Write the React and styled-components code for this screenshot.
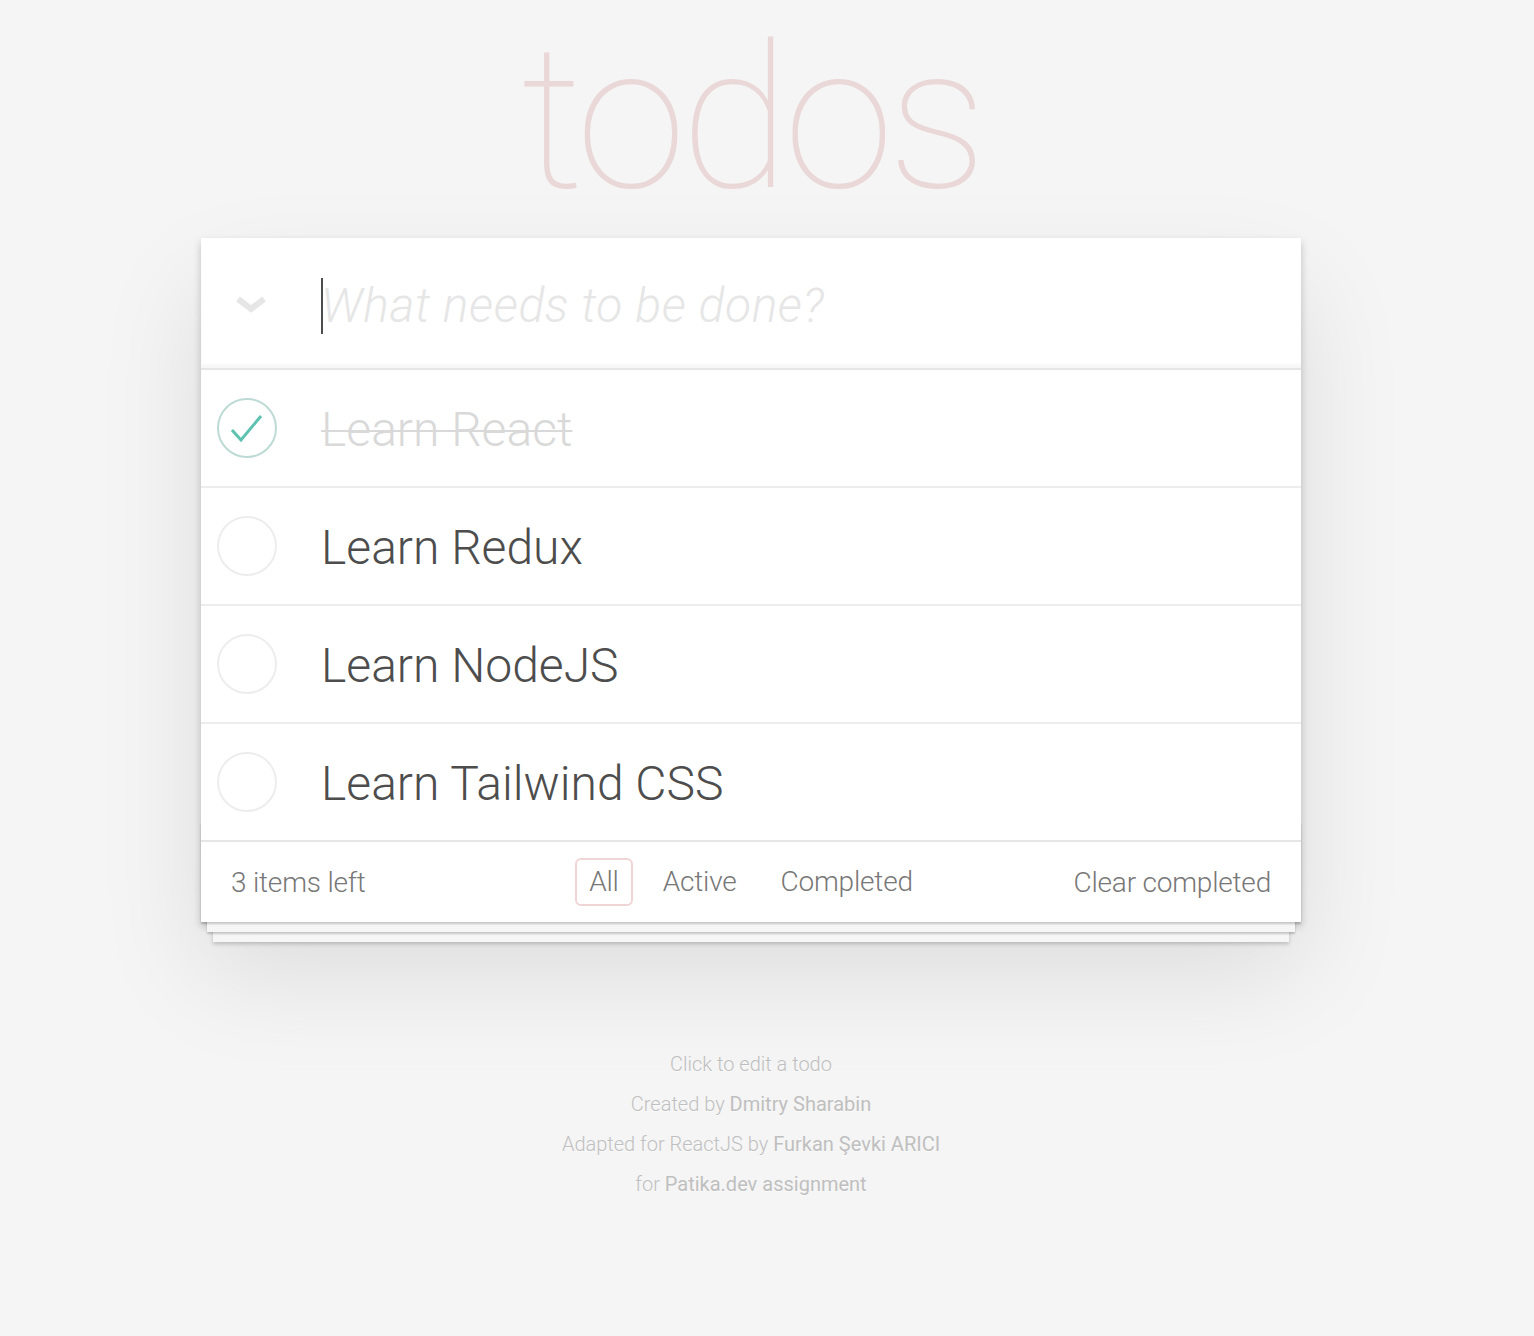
import React, { useState } from "react";
import styled, { createGlobalStyle } from "styled-components";

const GlobalStyle = createGlobalStyle`
  html, body {
    margin: 0;
    padding: 0;
  }
  body {
    background: #f5f5f5;
    color: #4d4d4d;
    font-family: "Helvetica Neue", Roboto, "Liberation Sans", Arial, sans-serif;
    font-weight: 300;
    -webkit-font-smoothing: antialiased;
  }
`;

const Page = styled.div`
  display: flex;
  justify-content: center;
  padding-right: 32px;
  min-height: 1336px;
  box-sizing: border-box;
`;

const Container = styled.section`
  width: 1100px;
  display: flex;
  flex-direction: column;
`;

const Title = styled.h1`
  margin: 0;
  height: 238px;
  font-size: 200px;
  line-height: 238px;
  font-weight: 100;
  text-align: center;
  color: rgba(175, 47, 47, 0.15);
  letter-spacing: -6px;
`;

const Card = styled.div`
  background: #fff;
  position: relative;
  box-shadow: 0 4px 8px 0 rgba(0, 0, 0, 0.2), 0 50px 100px 0 rgba(0, 0, 0, 0.1);
`;

const Header = styled.header`
  display: flex;
  align-items: center;
  height: 130px;
  box-shadow: inset 0 -4px 2px rgba(0, 0, 0, 0.03);
`;

const ToggleAll = styled.button`
  width: 120px;
  height: 100%;
  border: none;
  background: none;
  padding: 0;
  display: flex;
  align-items: center;
  justify-content: center;
  cursor: pointer;
  svg {
    margin-left: -20px;
    margin-top: 4px;
  }
`;

const Caret = styled.span`
  width: 2px;
  height: 56px;
  margin-top: 6px;
  margin-right: -2px;
  background: #4d4d4d;
`;

const NewTodo = styled.input`
  flex: 1;
  border: none;
  outline: none;
  background: transparent;
  font-family: inherit;
  font-size: 48px;
  font-weight: 300;
  color: #4d4d4d;
  caret-color: #4d4d4d;
  padding: 0;
  height: 60px;
  margin-top: 4px;
  &::placeholder {
    font-style: italic;
    color: #e6e6e6;
    font-weight: 300;
    letter-spacing: 0.6px;
  }
`;

const List = styled.ul`
  list-style: none;
  margin: 0;
  padding: 0;
  border-top: 2px solid #e6e6e6;
`;

const Item = styled.li`
  display: flex;
  align-items: center;
  height: 118px;
  box-sizing: border-box;
  border-bottom: 2px solid #ededed;
  &:last-child {
    border-bottom: none;
    height: 116px;
  }
`;

const CheckCell = styled.div`
  width: 120px;
  display: flex;
  padding-left: 16px;
  box-sizing: border-box;
`;

const Circle = styled.span`
  width: 60px;
  height: 60px;
  box-sizing: border-box;
  border-radius: 50%;
  border: 2px solid ${(p) => (p.$done ? "#bddad5" : "#ededed")};
  display: flex;
  align-items: center;
  justify-content: center;
`;

const Label = styled.label`
  font-size: 48px;
  line-height: 1.2;
  font-weight: 300;
  color: ${(p) => (p.$done ? "#d9d9d9" : "#4d4d4d")};
  text-decoration: ${(p) => (p.$done ? "line-through" : "none")};
  text-decoration-thickness: 2px;
  margin-top: 4px;
`;

const Footer = styled.footer`
  position: relative;
  height: 82px;
  box-sizing: border-box;
  border-top: 2px solid #e6e6e6;
  padding: 0 30px;
  display: grid;
  grid-template-columns: 1fr auto 1fr;
  align-items: center;
  color: #777;
  font-size: 28px;
  &::before {
    content: "";
    position: absolute;
    right: 0;
    bottom: 0;
    left: 0;
    height: 100px;
    overflow: hidden;
    z-index: 0;
    box-shadow: 0 2px 2px rgba(0, 0, 0, 0.2), 0 16px 0 -6px #f6f6f6,
      0 18px 2px -6px rgba(0, 0, 0, 0.2), 0 32px 0 -12px #f6f6f6,
      0 34px 4px -12px rgba(0, 0, 0, 0.2);
  }
`;

const FooterInner = styled.div`
  position: relative;
  z-index: 1;
  display: flex;
  justify-content: ${(p) => p.$align || "flex-start"};
  letter-spacing: -0.2px;
`;

const Filters = styled.ul`
  list-style: none;
  margin: 0;
  padding: 0;
  display: flex;
  gap: 16px;
`;

const Filter = styled.a`
  display: block;
  color: inherit;
  text-decoration: none;
  padding: 5px 12px;
  line-height: 34px;
  border: 2px solid ${(p) => (p.$selected ? "rgba(175, 47, 47, 0.2)" : "transparent")};
  border-radius: 6px;
  cursor: pointer;
`;

const Clear = styled.button`
  border: none;
  background: none;
  padding: 0;
  font-family: inherit;
  font-size: 28px;
  font-weight: 300;
  color: #777;
  letter-spacing: -0.2px;
  cursor: pointer;
`;

const Info = styled.footer`
  margin-top: 130px;
  text-align: center;
  color: #bfbfbf;
  font-size: 20px;
  text-shadow: 0 1px 0 rgba(255, 255, 255, 0.5);
  p {
    margin: 0 0 16px;
    line-height: 24px;
  }
  a {
    color: inherit;
    text-decoration: none;
    font-weight: 400;
  }
`;

const Chevron = () => (
  <svg width="32" height="18" viewBox="0 0 32 18">
    <path d="M3 3 L16 13 L29 3" fill="none" stroke="#e6e6e6" strokeWidth="6" />
  </svg>
);

const Check = () => (
  <svg width="36" height="30" viewBox="0 0 36 30">
    <path d="M3 17 L12 27 L32 3" fill="none" stroke="#5dc2af" strokeWidth="3" />
  </svg>
);

const initial = [
  { id: 1, text: "Learn React", done: true },
  { id: 2, text: "Learn Redux", done: false },
  { id: 3, text: "Learn NodeJS", done: false },
  { id: 4, text: "Learn Tailwind CSS", done: false },
];

export default function App() {
  const [todos] = useState(initial);
  const left = todos.filter((t) => !t.done).length;

  return (
    <Page>
      <GlobalStyle />
      <Container>
        <Title>todos</Title>
        <Card>
          <Header>
            <ToggleAll aria-label="Mark all as complete">
              <Chevron />
            </ToggleAll>
            <Caret />
            <NewTodo placeholder="What needs to be done?" />
          </Header>
          <List>
            {todos.map((t) => (
              <Item key={t.id}>
                <CheckCell>
                  <Circle $done={t.done}>{t.done && <Check />}</Circle>
                </CheckCell>
                <Label $done={t.done}>{t.text}</Label>
              </Item>
            ))}
          </List>
          <Footer>
            <FooterInner>{left} items left</FooterInner>
            <FooterInner $align="center">
              <Filters>
                <li><Filter $selected>All</Filter></li>
                <li><Filter>Active</Filter></li>
                <li><Filter>Completed</Filter></li>
              </Filters>
            </FooterInner>
            <FooterInner $align="flex-end">
              <Clear>Clear completed</Clear>
            </FooterInner>
          </Footer>
        </Card>
        <Info>
          <p>Click to edit a todo</p>
          <p>
            Created by <a href="#">Dmitry Sharabin</a>
          </p>
          <p>
            Adapted for ReactJS by <a href="#">Furkan Şevki ARICI</a>
          </p>
          <p>
            for <a href="#">Patika.dev assignment</a>
          </p>
        </Info>
      </Container>
    </Page>
  );
}
